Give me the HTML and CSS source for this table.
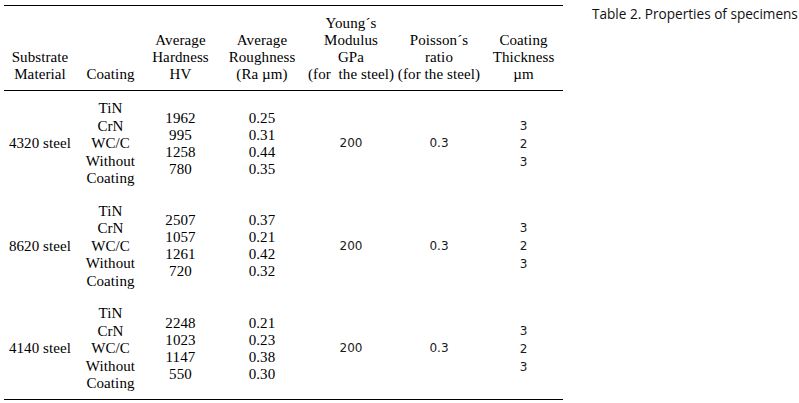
FILE: index.html
```html
<!DOCTYPE html>
<html>
<head>
<meta charset="utf-8">
<link rel="stylesheet" href="styles.css">
</head>
<body>
<div class="page">
  <table class="props">
    <colgroup>
      <col class="c1"><col class="c2"><col class="c3"><col class="c4"><col class="c5"><col class="c6"><col class="c7">
    </colgroup>
    <thead>
      <tr>
        <th>Substrate<br>Material</th>
        <th>Coating</th>
        <th>Average<br>Hardness<br>HV</th>
        <th>Average<br>Roughness<br>(Ra µm)</th>
        <th>Young´s<br>Modulus<br>GPa<br>(for &nbsp;the steel)</th>
        <th>Poisson´s<br>ratio<br>(for the steel)</th>
        <th>Coating<br>Thickness<br>µm</th>
      </tr>
    </thead>
    <tbody>
      <tr>
        <td>4320 steel</td>
        <td class="coat">TiN<br>CrN<br>WC/C<br>Without<br>Coating</td>
        <td class="num">1962<br>995<br>1258<br>780</td>
        <td class="num">0.25<br>0.31<br>0.44<br>0.35</td>
        <td class="sans">200</td>
        <td class="sans">0.3</td>
        <td class="sans thick">3<br>2<br>3</td>
      </tr>
      <tr>
        <td>8620 steel</td>
        <td class="coat">TiN<br>CrN<br>WC/C<br>Without<br>Coating</td>
        <td class="num">2507<br>1057<br>1261<br>720</td>
        <td class="num">0.37<br>0.21<br>0.42<br>0.32</td>
        <td class="sans">200</td>
        <td class="sans">0.3</td>
        <td class="sans thick">3<br>2<br>3</td>
      </tr>
      <tr>
        <td>4140 steel</td>
        <td class="coat">TiN<br>CrN<br>WC/C<br>Without<br>Coating</td>
        <td class="num">2248<br>1023<br>1147<br>550</td>
        <td class="num">0.21<br>0.23<br>0.38<br>0.30</td>
        <td class="sans">200</td>
        <td class="sans">0.3</td>
        <td class="sans thick">3<br>2<br>3</td>
      </tr>
    </tbody>
  </table>
  <div class="caption">Table 2. Properties of specimens</div>
</div>
</body>
</html>
```
FILE: styles.css
```css
html, body {
  margin: 0;
  padding: 0;
  background: #fff;
}
.page {
  display: flex;
  align-items: flex-start;
  padding: 5px 0 0 4px;
  gap: 29px;
}
.props {
  border-collapse: collapse;
  table-layout: fixed;
  width: 559px;
  font-family: "Liberation Serif", serif;
  font-size: 15px;
  letter-spacing: 0.1px;
  color: #000;
  border-top: 1px solid #000;
  border-bottom: 1px solid #000;
}
.c1 { width: 72px; }
.c2 { width: 69px; }
.c3 { width: 71px; }
.c4 { width: 92px; }
.c5 { width: 86px; }
.c6 { width: 90px; }
.c7 { width: 79px; }
.props th {
  font-weight: normal;
  vertical-align: bottom;
  text-align: center;
  line-height: 17px;
  padding: 0 0 7px 0;
  height: 77px;
  white-space: nowrap;
  border-bottom: 1px solid #000;
}
.props td {
  text-align: center;
  vertical-align: middle;
  padding: 9px 0 6px 0;
  line-height: 17px;
  white-space: nowrap;
}
.props td.coat {
  line-height: 17.5px;
}
.props td.sans {
  font-family: "DejaVu Sans", sans-serif;
  font-size: 12px;
  letter-spacing: 0;
  color: #1a1a1a;
}
.props td.thick {
  line-height: 18px;
}
.caption {
  font-family: "Open Sans", sans-serif;
  font-size: 13.6px;
  color: #111;
  line-height: 17px;
  white-space: nowrap;
}
```
